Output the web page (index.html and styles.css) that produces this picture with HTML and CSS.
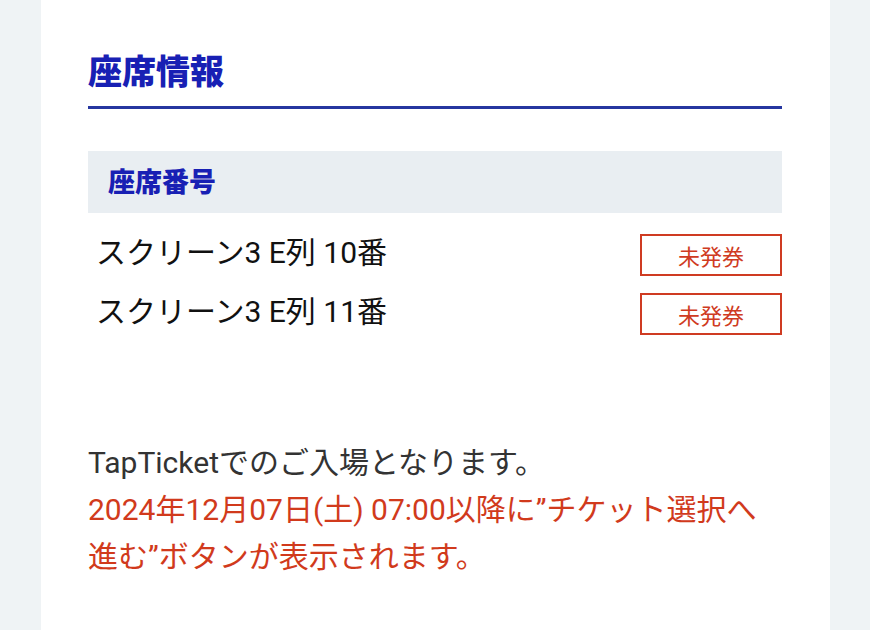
FILE: index.html
```html
<html>

<head>
  <title>座席情報</title>
  <link rel="stylesheet" href="styles.css">
</head>

<body>
  <div id="content">

    <h2 class="section-title">座席情報</h2>

    <div class="seat-table">
      <div class="seat-head">座席番号</div>
      <ul class="seat-list">
        <li class="seat-row">
          <span class="seat-name">スクリーン3 E列 10番</span>
          <span class="status">未発券</span>
        </li>
        <li class="seat-row">
          <span class="seat-name">スクリーン3 E列 11番</span>
          <span class="status">未発券</span>
        </li>
      </ul>
    </div>

    <p class="notice">
      TapTicketでのご入場となります。<br />
      <span class="notice-alert">2024年12月07日(土) 07:00以降に”チケット選択へ進む”ボタンが表示されます。</span>
    </p>

  </div>
</body>

</html>
```

FILE: styles.css
```css
body {
  background: #eff3f5;
  margin: 0;
  font-family: Roboto, "Noto Sans CJK JP", sans-serif;
  color: #222;
}

#content {
  width: 789px;
  min-height: 100vh;
  margin-left: 41px;
  padding: 48px 48px 0 47px;
  box-sizing: border-box;
  background: #fff;
}

.section-title {
  margin: 0;
  padding-bottom: 10px;
  font-size: 34px;
  line-height: 48px;
  font-weight: 900;
  color: #1820b4;
  border-bottom: 3px solid #2636a0;
}

.seat-table {
  margin-top: 42px;
}

.seat-head {
  height: 62px;
  display: flex;
  align-items: center;
  padding: 0 0 4px 20px;
  box-sizing: border-box;
  background: #e9eef2;
  font-size: 27px;
  font-weight: 900;
  color: #1820b4;
}

.seat-list {
  list-style: none;
  margin: 21px 0 0;
  padding: 0 0 0 8px;
  display: flex;
  flex-direction: column;
  gap: 17px;
}

.seat-row {
  height: 42px;
  display: flex;
  align-items: center;
  justify-content: space-between;
}

.seat-name {
  font-size: 30px;
  line-height: 38px;
  margin-top: -4px;
  color: #111;
}

.status {
  width: 138px;
  height: 38px;
  display: flex;
  align-items: center;
  justify-content: center;
  border: 2px solid #cf3b22;
  font-size: 22px;
  color: #cf3b22;
}

.notice {
  margin: 104px 0 0;
  font-size: 30px;
  line-height: 47px;
  color: #333;
}

.notice-alert {
  color: #d13a1c;
}
```
